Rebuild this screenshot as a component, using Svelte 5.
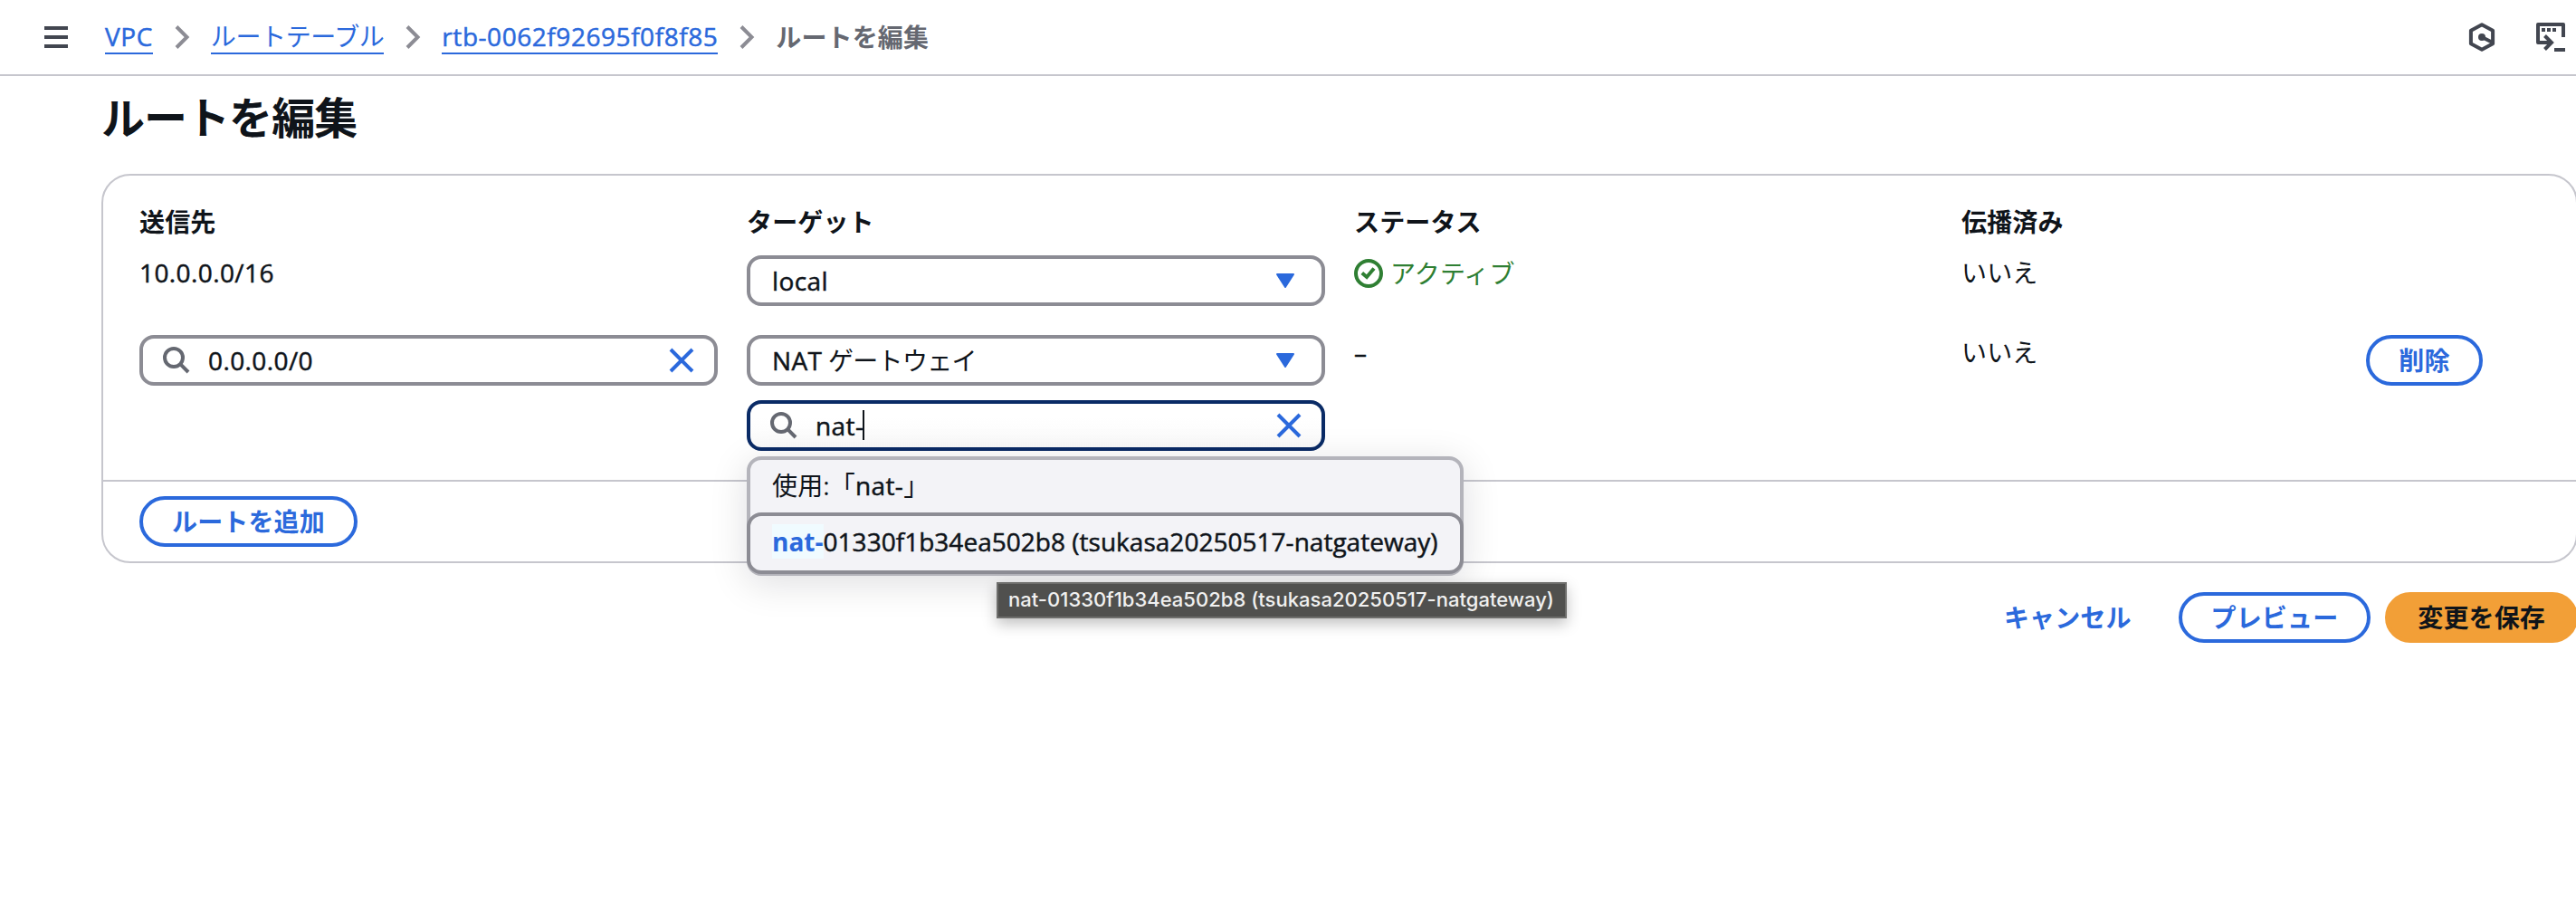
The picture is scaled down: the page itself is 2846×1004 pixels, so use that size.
<script lang="ts">
	type Crumb = { label: string; href?: string; latin?: boolean };

	const crumbs: Crumb[] = [
		{ label: 'VPC', href: '#vpc', latin: true },
		{ label: 'ルートテーブル', href: '#route-tables' },
		{ label: 'rtb-0062f92695f0f8f85', href: '#route-table', latin: true },
		{ label: 'ルートを編集' }
	];

	const columns = ['送信先', 'ターゲット', 'ステータス', '伝播済み'];
	const gateway = { match: 'nat-', rest: '01330f1b34ea502b8 (tsukasa20250517-natgateway)' };
</script>

{#snippet searchIcon()}
	<svg class="icon" viewBox="0 0 32 32" aria-hidden="true">
		<circle cx="14" cy="13" r="10" />
		<path d="M21.2 20.2 30 29" />
	</svg>
{/snippet}

{#snippet closeIcon()}
	<svg class="icon icon--close" viewBox="0 0 32 32" aria-hidden="true">
		<path d="M4 4 28 28M28 4 4 28" />
	</svg>
{/snippet}

{#snippet caretIcon()}
	<svg class="icon icon--caret" viewBox="0 0 32 32" aria-hidden="true">
		<path d="M7 9h18l-9 14z" />
	</svg>
{/snippet}

<div class="page">
	<header class="topbar">
		<svg class="menu" viewBox="0 0 32 32" aria-hidden="true">
			<path d="M3 6h26M3 16h26M3 26h26" />
		</svg>
		<nav class="crumbs">
			{#each crumbs as crumb, i}
				{#if i > 0}
					<svg class="icon icon--chevron" viewBox="0 0 32 32" aria-hidden="true">
						<path d="M10 4.5 21.5 16 10 27.5" />
					</svg>
				{/if}
				{#if crumb.href}
					<a href={crumb.href} class:latin={crumb.latin}>{crumb.label}</a>
				{:else}
					<span class="crumbs__current">{crumb.label}</span>
				{/if}
			{/each}
		</nav>
		<div class="tools">
			<svg class="tool" viewBox="0 0 32 32" aria-hidden="true">
				<path d="M16 2.3 28.1 8.8V23.2L16 29.7 3.9 23.2V8.8z" stroke-linejoin="round" />
				<path d="M16 16 27 21.5" />
				<circle cx="16" cy="16" r="4" class="tool__fill" />
			</svg>
			<svg class="tool" viewBox="0 0 32 32" aria-hidden="true">
				<path d="M30 16V2H2v20h15" stroke-linejoin="round" />
				<path d="M9.5 14.5 17 22l-7.500 7.500" />
				<path d="M20 30h12" />
				<path d="M6 8h4M12 8h4M18 8h4" />
			</svg>
		</div>
	</header>

	<main>
		<h1>ルートを編集</h1>

		<section class="card">
			<div class="grid">
				{#each columns as column}
					<div class="label">{column}</div>
				{/each}
				<div></div>

				<div class="value latin">10.0.0.0/16</div>
				<div class="field">
					<span class="field__text latin">local</span>
					{@render caretIcon()}
				</div>
				<div class="value status">
					<svg class="status__icon" viewBox="0 0 32 32" aria-hidden="true">
						<circle cx="16" cy="16" r="14" />
						<path d="M8.8 15.500 14 20 22 10.500" />
					</svg>
					アクティブ
				</div>
				<div class="value">いいえ</div>
				<div></div>

				<div class="field field--search">
					{@render searchIcon()}
					<span class="field__text latin">0.0.0.0/0</span>
					{@render closeIcon()}
				</div>
				<div class="stack">
					<div class="field">
						<span class="field__text field__text--kana"><span class="latin">NAT</span> ゲートウェイ</span>
						{@render caretIcon()}
					</div>
					<div class="field field--search field--focus">
						{@render searchIcon()}
						<span class="field__text latin">nat-<i class="cursor"></i></span>
						{@render closeIcon()}
					</div>
					<div class="dropdown">
						<div class="option">使用:「<span class="latin">nat-</span>」</div>
						<div class="option option--active latin">
							<mark>{gateway.match}</mark>{gateway.rest}
						</div>
						<div class="tooltip">{gateway.match}{gateway.rest}</div>
					</div>
				</div>
				<div class="value latin">–</div>
				<div class="value">いいえ</div>
				<button type="button" class="button">削除</button>
			</div>
			<div class="card__footer">
				<button type="button" class="button">ルートを追加</button>
			</div>
		</section>

		<div class="actions">
			<button type="button" class="button button--link">キャンセル</button>
			<button type="button" class="button">プレビュー</button>
			<button type="button" class="button button--primary">変更を保存</button>
		</div>
	</main>
</div>

<style>
	:global(body) {
		background: #fff;
		overflow: hidden;
	}

	.page {
		width: 2848px;
		height: 1004px;
		color: #0f141a;
		font-family: 'Open Sans', 'Noto Sans CJK JP', sans-serif;
		font-size: 28px;
		letter-spacing: 0.005em;
		line-height: 40px;
		white-space: nowrap;
	}

	.latin {
		font-weight: 500;
		letter-spacing: 0.4px;
		-webkit-text-stroke: 0.5px currentColor;
	}

	.icon {
		flex: none;
		width: 32px;
		height: 32px;
		fill: none;
		stroke: #656871;
		stroke-width: 4;
	}

	.icon--close {
		stroke: #2b69dc;
	}

	.icon--caret {
		fill: #2b69dc;
		stroke: #2b69dc;
		stroke-width: 2;
		stroke-linejoin: round;
	}

	.icon--chevron {
		stroke: #8c8c94;
	}

	.topbar {
		display: flex;
		box-sizing: border-box;
		height: 84px;
		align-items: center;
		padding: 0 14px 0 46px;
		border-bottom: 2px solid #c6c6cd;
	}

	.menu {
		width: 32px;
		height: 32px;
		margin-right: 38px;
		fill: none;
		stroke: #424650;
		stroke-width: 4;
	}

	.crumbs {
		display: flex;
		align-items: center;
		gap: 16px;
	}

	.crumbs a {
		height: 36px;
		border-bottom: 2px solid #2b69dc;
		color: #2b69dc;
		letter-spacing: 0.55px;
		line-height: 36px;
		text-decoration: none;
	}

	.crumbs a:not(.latin) {
		letter-spacing: -0.4px;
	}

	.crumbs__current {
		color: #656871;
		font-weight: 700;
	}

	.tools {
		display: flex;
		gap: 44px;
		margin-left: auto;
	}

	.tool {
		width: 32px;
		height: 32px;
		fill: none;
		stroke: #424650;
		stroke-width: 4;
	}

	.tool__fill {
		fill: #424650;
		stroke: none;
	}

	main {
		padding-left: 112px;
	}

	h1 {
		margin: 0;
		padding: 16px 0 32px;
		font-size: 48px;
		font-weight: 700;
		letter-spacing: -0.02em;
		line-height: 60px;
	}

	.card {
		box-sizing: border-box;
		height: 430px;
		border: 2px solid #c6c6cd;
		border-radius: 32px;
	}

	.grid {
		display: grid;
		box-sizing: border-box;
		height: 336px;
		grid-template-columns: 639px 639px 639px 415px 129px;
		grid-template-rows: 40px 56px 128px;
		align-items: start;
		column-gap: 32px;
		padding: 31px 0 0 40px;
	}

	.grid > :nth-child(n + 6) {
		margin-top: 17px;
	}

	.grid > :nth-child(n + 11) {
		margin-top: 49px;
	}

	.label {
		font-weight: 700;
	}

	.value {
		line-height: 38px;
	}

	.status {
		display: flex;
		height: 40px;
		align-items: center;
		gap: 8px;
		color: #2f7f33;
	}

	.status__icon {
		width: 32px;
		height: 32px;
		fill: none;
		stroke: currentColor;
		stroke-width: 4;
	}

	.field {
		display: flex;
		box-sizing: border-box;
		height: 56px;
		align-items: center;
		padding: 0 24px 0 20px;
		border: 4px solid #8c8c94;
		border-radius: 16px;
		background: #fff;
	}

	.field--search {
		padding-right: 20px;
	}

	.field__text {
		flex: 1;
		padding-left: 4px;
	}

	.field__text--kana {
		letter-spacing: -0.7px;
	}

	.icon + .field__text {
		padding-left: 20px;
	}

	.field--focus {
		border-color: #0a2b66;
		background: linear-gradient(#fff 30%, #fafafa);
	}

	.cursor {
		display: inline-block;
		width: 2px;
		height: 33px;
		margin-left: -1px;
		background: #0f141a;
		vertical-align: -5px;
	}

	.stack {
		position: relative;
		display: grid;
		gap: 16px;
	}

	.dropdown {
		position: absolute;
		top: 134px;
		left: 0;
		box-sizing: border-box;
		width: 792px;
		height: 132px;
		border: 4px solid #b4b4bb;
		border-radius: 16px;
		background: #f3f3f7;
		box-shadow: 0 8px 40px 2px rgb(0 7 22 / 12%);
	}

	.option {
		box-sizing: border-box;
		height: 58px;
		padding: 8px 24px;
	}

	.option--active {
		height: 68px;
		margin: 0 -4px;
		border: 4px solid #8c8c94;
		border-radius: 16px;
		letter-spacing: 0.02px;
	}

	mark {
		background: #f0fbff;
		color: #2b69dc;
		font-weight: 700;
		-webkit-text-stroke: 0;
	}

	.tooltip {
		position: absolute;
		top: 135px;
		left: 272px;
		box-sizing: border-box;
		width: 630px;
		height: 40px;
		padding-left: 11px;
		border: 2px solid #6e6e6c;
		background: #50504e;
		box-shadow: 0 6px 16px rgb(0 0 0 / 25%);
		color: #f0f0f0;
		font-family: Inter, sans-serif;
		font-size: 22px;
		font-weight: 500;
		letter-spacing: 0.02px;
		line-height: 35px;
	}

	.button {
		box-sizing: border-box;
		height: 56px;
		padding: 0 32px;
		border: 4px solid #2b69dc;
		border-radius: 28px;
		background: #fff;
		color: #2b69dc;
		font: inherit;
		font-weight: 700;
		letter-spacing: inherit;
		line-height: 40px;
	}

	.button--link {
		border-color: transparent;
		background: transparent;
	}

	.button--primary {
		border-color: #f29f37;
		background: #f29f37;
		color: #0f141a;
	}

	.card__footer {
		padding: 16px 40px;
		border-top: 2px solid #c6c6cd;
	}

	.actions {
		display: flex;
		justify-content: flex-end;
		gap: 16px;
		padding-top: 32px;
	}
</style>
